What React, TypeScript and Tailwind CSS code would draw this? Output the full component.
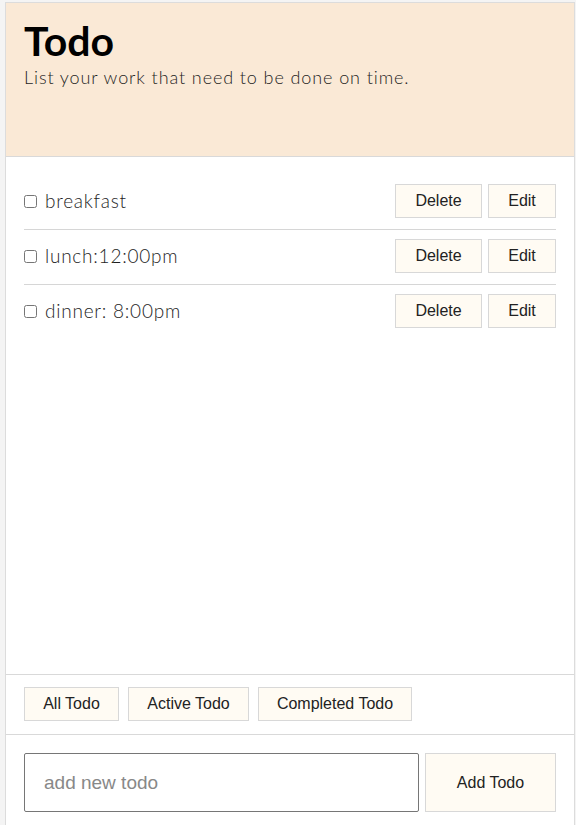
import { useState } from 'react';

type Todo = { id: number; text: string; done: boolean };

const initial: Todo[] = [
  { id: 1, text: 'breakfast', done: false },
  { id: 2, text: 'lunch:12:00pm', done: false },
  { id: 3, text: 'dinner: 8:00pm', done: false },
];

const btn =
  "h-[34px] bg-[#fffbf3] border border-[#d8d8d8] text-[16px] text-[#222] font-['Liberation_Sans',Arial,sans-serif]";

export default function App() {
  const [todos, setTodos] = useState<Todo[]>(initial);
  const [draft, setDraft] = useState('');

  const toggle = (id: number) =>
    setTodos((t) => t.map((x) => (x.id === id ? { ...x, done: !x.done } : x)));
  const remove = (id: number) => setTodos((t) => t.filter((x) => x.id !== id));
  const add = () => {
    if (!draft.trim()) return;
    setTodos((t) => [...t, { id: Date.now(), text: draft.trim(), done: false }]);
    setDraft('');
  };

  return (
    <div className="h-[825px] overflow-hidden bg-[#f4f4f4] pt-[2px] pl-[5px]">
      <div className="w-[570px] bg-white border border-[#dcdcdc] flex flex-col font-['Lato',sans-serif]">
        {/* Header */}
        <div className="h-[154px] bg-[#fae9d6] border-b border-[#d9d9d9] px-[18px] pt-[16px]">
          <h1 className="text-[41px] leading-[44px] font-bold text-black">Todo</h1>
          <p className="mt-[2px] text-[18px] leading-[24px] font-light tracking-[0.05em] text-[#1e1e1e]">
            List your work that need to be done on time.
          </p>
        </div>

        {/* List */}
        <div className="h-[517px] px-[18px] pt-[18px]">
          {todos.map((todo, i) => (
            <div
              key={todo.id}
              className={`flex items-center justify-between pt-[9px] pb-[11px] ${
                i < todos.length - 1 ? 'border-b border-[#d6d6d6]' : ''
              }`}
            >
              <label className="flex items-center gap-[8px] text-[19px] font-light tracking-[0.04em] text-[#1e1e1e]">
                <input
                  type="checkbox"
                  checked={todo.done}
                  onChange={() => toggle(todo.id)}
                  className="w-[13px] h-[13px] m-0"
                />
                <span className={todo.done ? 'line-through' : ''}>{todo.text}</span>
              </label>
              <div className="flex gap-[6px]">
                <button className={`${btn} w-[87px]`} onClick={() => remove(todo.id)}>
                  Delete
                </button>
                <button className={`${btn} w-[68px]`}>Edit</button>
              </div>
            </div>
          ))}
        </div>

        {/* Filters */}
        <div className="border-t border-[#d9d9d9] px-[18px] pt-[12px] pb-[13px] flex gap-[9px]">
          <button className={`${btn} w-[95px]`}>All Todo</button>
          <button className={`${btn} w-[121px]`}>Active Todo</button>
          <button className={`${btn} w-[154px]`}>Completed Todo</button>
        </div>

        {/* Add */}
        <div className="border-t border-[#d9d9d9] px-[18px] pt-[18px] pb-[18px] flex gap-[6px]">
          <input
            value={draft}
            onChange={(e) => setDraft(e.target.value)}
            placeholder="add new todo"
            className="w-[395px] h-[59px] border border-[#767676] rounded-[2px] px-[19px] text-[19px] text-[#222] placeholder:text-[#888] outline-none font-['Liberation_Sans',Arial,sans-serif]"
          />
          <button className={`${btn} w-[131px] h-[59px]`} onClick={add}>
            Add Todo
          </button>
        </div>
      </div>
    </div>
  );
}
